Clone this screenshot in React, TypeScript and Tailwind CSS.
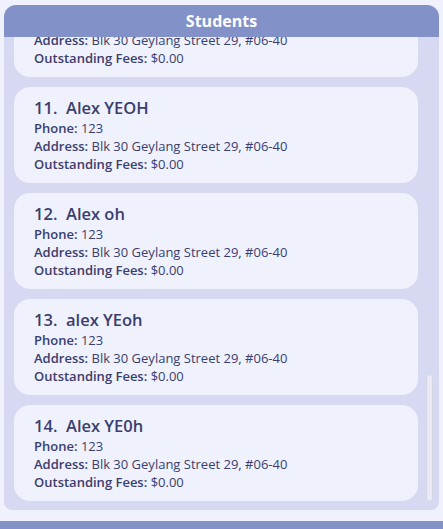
const students = [
  { no: 10, name: "Alex Yeoh" },
  { no: 11, name: "Alex YEOH" },
  { no: 12, name: "Alex oh" },
  { no: 13, name: "alex YEoh" },
  { no: 14, name: "Alex YE0h" },
];

const StudentCard = ({ no, name }: { no: number; name: string }) => {
  return (
    <div className="h-[96px] shrink-0 rounded-2xl bg-[#eff1fd] px-5 pt-[10px] text-[#3b3e6d]">
      <div className="text-[16.5px] font-semibold leading-[22px]">
        {no}.&nbsp; {name}
      </div>
      <div className="text-[13px] leading-[18px]">
        <div>
          <span className="font-semibold">Phone:</span> 123
        </div>
        <div>
          <span className="font-semibold">Address:</span> Blk 30 Geylang Street 29, #06-40
        </div>
        <div>
          <span className="font-semibold">Outstanding Fees:</span> $0.00
        </div>
      </div>
    </div>
  );
};

export default function App() {
  return (
    <div className="flex h-[529px] w-[443px] flex-col bg-[#eff1fd] font-['Open_Sans',sans-serif]">
      <div className="mx-[4px] mt-[5px] flex h-[505px] flex-col overflow-hidden rounded-t-xl rounded-b-lg bg-[#d6d9f1]">
        <div className="flex h-[32px] shrink-0 items-center justify-center bg-[#8391c9] text-[16px] font-bold text-white">
          Students
        </div>
        <div className="flex min-h-0 flex-1 flex-row">
          <div className="min-h-0 flex-1 overflow-hidden pl-[10px]">
            <div className="-mt-[56px] flex flex-col gap-[10px]">
              {students.map((s) => (
                <StudentCard key={s.no} no={s.no} name={s.name} />
              ))}
            </div>
          </div>
          <div className="flex w-[21px] shrink-0 flex-col items-center pl-[2px]">
            <div className="mt-[337px] h-[128px] w-[7px] rounded-full border border-[#d2d4e6] bg-[#e9eaf4]" />
          </div>
        </div>
      </div>
      <div className="mt-auto h-[8px] bg-[#8391c9]" />
    </div>
  );
}
